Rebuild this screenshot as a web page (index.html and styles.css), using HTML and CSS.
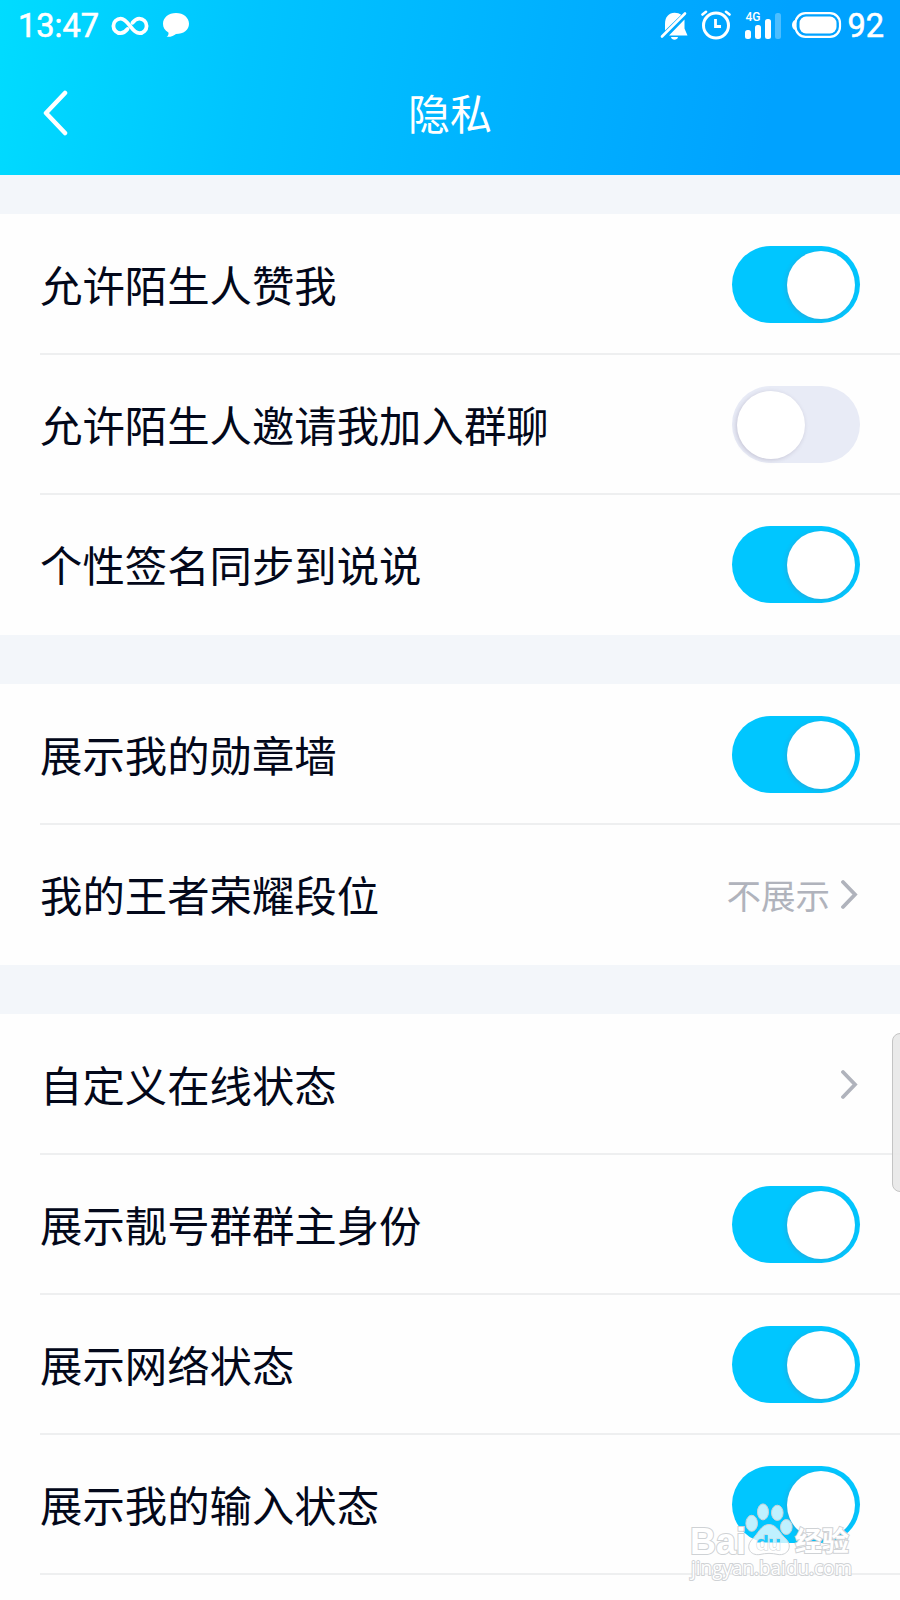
FILE: index.html
```html
<!DOCTYPE html>
<html lang="zh-CN">
<head>
  <meta charset="UTF-8" />
  <meta name="viewport" content="width=device-width, initial-scale=1.0" />
  <title>隐私</title>
  <link rel="stylesheet" href="styles.css">
</head>
<body>

  <header>
    <div class="status-bar">
      <span class="time">13:47</span>
      <svg class="icon-infinity" width="38" height="20" viewBox="0 0 38 20">
        <path d="M16.500 13 C14.500 15.500 12.500 17.200 9.700 17.200 A7.300 7.300 0 0 1 9.700 2.600 C17.500 2.600 20.500 17.200 28.300 17.200 A7.300 7.300 0 0 0 28.300 2.600 C25.500 2.600 23.500 4.300 21.500 6.800" />
      </svg>
      <svg class="icon-chat" width="28" height="26" viewBox="0 0 28 26">
        <path d="M14 1 C21.500 1 27 5.600 27 11.700 C27 18 21.500 22 14 22 C12 23.800 8.500 25.200 4.600 24.800 C6.300 23.500 6.800 22 6.400 20.400 C2.800 18.400 1 15.400 1 11.700 C1 5.600 6.500 1 14 1 Z" />
      </svg>

      <div class="status-right">
        <svg class="icon-bell" width="28" height="30" viewBox="0 0 28 30">
          <path d="M5 19.500 V12.500 C5 6 9 1.800 14.500 1.800 C17.500 1.800 19.500 2.500 21.200 3.800 Z" fill="#fff" />
          <path d="M24.500 8.500 V17.500 L27.500 24.500 H9 Z" fill="#fff" />
          <path d="M11 26 H18 C17.500 29.500 11.500 29.500 11 26 Z" fill="#fff" />
          <path d="M2 25.500 L25 2.500" stroke="#fff" stroke-width="2.600" stroke-linecap="round" />
        </svg>
        <svg class="icon-alarm" width="30" height="30" viewBox="0 0 30 30" fill="none" stroke="#fff">
          <circle cx="15" cy="15.500" r="12.500" stroke-width="3" />
          <path d="M14.500 9 V16.500 H20" stroke-width="2.800" />
          <path d="M1.500 4.500 L5 1.800 M25 1.800 L28.500 4.500" stroke-width="2.600" stroke-linecap="round" />
        </svg>
        <div class="signal">
          <span class="network">4G</span>
          <svg width="37" height="30" viewBox="0 0 37 30" fill="#fff">
            <rect x="0" y="20" width="6" height="9" rx="2.500" />
            <rect x="10" y="15" width="6" height="14" rx="2.500" />
            <rect x="20" y="9" width="6" height="20" rx="2.500" />
            <rect x="30" y="3" width="6" height="26" rx="2.500" opacity="0.3" />
          </svg>
        </div>
        <svg class="icon-battery" width="51" height="28" viewBox="0 0 51 28">
          <path d="M4 9 C0 10.500 0 17.500 4 19 Z" fill="#fff" />
          <rect x="4.500" y="2.200" width="44.500" height="23.600" rx="10" fill="none" stroke="#fff" stroke-width="2.200" />
          <rect x="8.500" y="5.500" width="37" height="17" rx="6.500" fill="#fff" />
        </svg>
        <span class="battery-level">92</span>
      </div>
    </div>

    <div class="title-bar">
      <svg class="back" width="28" height="50" viewBox="0 0 28 50">
        <path d="M25 5 L6 25 L25 45" />
      </svg>
      <h1>隐私</h1>
    </div>
  </header>

  <main>
    <section>
      <div class="row"><span class="label">允许陌生人赞我</span><span class="switch on"></span></div>
      <div class="row"><span class="label">允许陌生人邀请我加入群聊</span><span class="switch"></span></div>
      <div class="row"><span class="label">个性签名同步到说说</span><span class="switch on"></span></div>
    </section>

    <section>
      <div class="row"><span class="label">展示我的勋章墙</span><span class="switch on"></span></div>
      <div class="row">
        <span class="label">我的王者荣耀段位</span>
        <span class="value"><span class="label">不展示</span>
          <svg width="18" height="32" viewBox="0 0 18 32"><path d="M2 4 L14 16.500 L2 29" /></svg>
        </span>
      </div>
    </section>

    <section>
      <div class="row">
        <span class="label">自定义在线状态</span>
        <span class="value">
          <svg width="18" height="32" viewBox="0 0 18 32"><path d="M2 4 L14 16.500 L2 29" /></svg>
        </span>
      </div>
      <div class="row"><span class="label">展示靓号群群主身份</span><span class="switch on"></span></div>
      <div class="row"><span class="label">展示网络状态</span><span class="switch on"></span></div>
      <div class="row"><span class="label">展示我的输入状态</span><span class="switch on"></span></div>
    </section>
  </main>

  <div class="side-handle"></div>

  <div class="watermark">
    <svg width="180" height="84" viewBox="0 0 180 84">
      <defs>
        <linearGradient id="du-fill" gradientUnits="userSpaceOnUse" x1="0" y1="42" x2="0" y2="43">
          <stop offset="0" stop-color="#1ccaff" />
          <stop offset="1" stop-color="#fff" />
        </linearGradient>
      </defs>
      <g class="mark">
        <text class="brand" x="8" y="54" textLength="56" lengthAdjust="spacingAndGlyphs">Bai</text>
        <ellipse cx="69.700" cy="23.300" rx="5.800" ry="8" />
        <ellipse cx="81" cy="11.900" rx="5.500" ry="8" />
        <ellipse cx="95.300" cy="12.800" rx="5.800" ry="7.600" />
        <ellipse cx="104.300" cy="27" rx="5.800" ry="7.500" />
        <path d="M87 24.500 C95 24.500 98 34 104 39 C111 46 106 56 96 54.500 C90 53 84 53 78 54.500 C68 56 63 47 70 39.500 C76 34 79 24.500 87 24.500 Z" />
        <text class="brand-cn" x="113" y="51" textLength="54">经验</text>
        <text class="site" x="9" y="75" textLength="161" lengthAdjust="spacingAndGlyphs">jingyan.baidu.com</text>
      </g>
      <text class="du" x="74" y="50" textLength="25">du</text>
    </svg>
  </div>

</body>
</html>
```
FILE: styles.css
```css
* {
  box-sizing: border-box;
}

body {
  margin: 0;
  height: 1600px;
  position: relative;
  overflow: hidden;
  font-family: Roboto, 'Noto Sans CJK SC', sans-serif;
  background-color: #fefefe;
  color: #03081a;
}

svg {
  display: block;
  flex-shrink: 0;
}

header {
  height: 175px;
  color: #fff;
  background: linear-gradient(100deg, #00dcff 0%, #00c4ff 28%, #00b0ff 60%, #00a2ff 85%, #00a2ff 100%);
}

.status-bar {
  height: 50px;
  padding: 0 16px 0 18px;
  display: flex;
  align-items: center;
}

.time,
.battery-level {
  padding-top: 2px;
  font-size: 32.500px;
  font-weight: 400;
  line-height: 48px;
  -webkit-text-stroke: 0.6px #fff;
}

.time {
  width: 81px;
}

.icon-infinity {
  margin-left: 12px;
  margin-top: 2px;
  fill: none;
  stroke: #fff;
  stroke-width: 3.800;
  stroke-linecap: round;
}

.icon-chat {
  margin-left: 13px;
  fill: #fff;
}

.status-right {
  margin-left: auto;
  display: flex;
  align-items: center;
}

.icon-bell {
  margin-top: 1px;
}

.icon-alarm {
  margin-left: 13px;
}

.signal {
  position: relative;
  margin-left: 14px;
}

.network {
  position: absolute;
  left: 0;
  top: 0;
  font-size: 12px;
  font-weight: 500;
  line-height: 14px;
}

.icon-battery {
  margin-left: 9px;
}

.battery-level {
  margin-left: 5px;
}

.title-bar {
  height: 125px;
  padding: 0 40px;
  display: grid;
  grid-template-columns: 28px 1fr 28px;
  align-items: center;
}

.back {
  fill: none;
  stroke: #fff;
  stroke-width: 4.500;
  stroke-linecap: round;
  stroke-linejoin: round;
}

h1 {
  margin: 0;
  padding-top: 6px;
  font-size: 42px;
  font-weight: 400;
  line-height: 119px;
  text-align: center;
}

main {
  padding-top: 39px;
  background-color: #f3f6fa;
}

section {
  padding: 1px 0 0 40px;
  margin-bottom: 49px;
  background-color: #fefefe;
}

section:last-child {
  margin-bottom: 0;
  height: 600px;
}

.row {
  height: 140px;
  padding-right: 40px;
  display: flex;
  align-items: center;
  justify-content: space-between;
  border-bottom: 2px solid #eeeff0;
  font-size: 42.400px;
}

.label {
  padding-bottom: 1px;
}

section:not(:last-child) .row:last-child {
  border-bottom-color: transparent;
}

.switch {
  width: 128px;
  height: 77px;
  margin-top: 1px;
  padding: 5px;
  border-radius: 39px;
  background-color: #e8ebf6;
}

.switch::before {
  content: '';
  display: block;
  width: 68px;
  height: 68px;
  border-radius: 50%;
  background-color: #fff;
  box-shadow: -1px 1px 4px rgba(120, 110, 140, 0.3);
}

.switch.on {
  background-color: #00c6ff;
}

.switch.on::before {
  margin-left: 50px;
}

.value {
  margin-right: 1px;
  display: flex;
  align-items: center;
  gap: 11px;
  font-size: 34.500px;
  color: #b0b3bc;
}

.value path {
  fill: none;
  stroke: #b0b3bc;
  stroke-width: 3.800;
  stroke-linecap: round;
}

.side-handle {
  position: absolute;
  right: -10px;
  top: 1033px;
  width: 18px;
  height: 159px;
  border: 1px solid #c4c4c4;
  border-radius: 8px;
  background-color: rgba(232, 232, 232, 0.9);
}

.watermark {
  position: absolute;
  left: 682px;
  top: 1500px;
}

.mark {
  fill: rgba(255, 255, 255, 0.75);
  stroke: #cfd2d5;
  stroke-width: 1;
}

.brand {
  font: bold 36px 'Liberation Sans', sans-serif;
}

.brand-cn {
  font: bold 27px 'Noto Sans CJK SC', sans-serif;
}

.brand,
.brand-cn,
.site {
  fill: #fff;
  stroke-width: 2;
  paint-order: stroke;
}

.site {
  font: 20px 'Open Sans', sans-serif;
}

.du {
  font: bold 21px 'Liberation Sans', sans-serif;
  fill: url(#du-fill);
  stroke: #cfd2d5;
  stroke-width: 1;
  paint-order: stroke;
}
```
